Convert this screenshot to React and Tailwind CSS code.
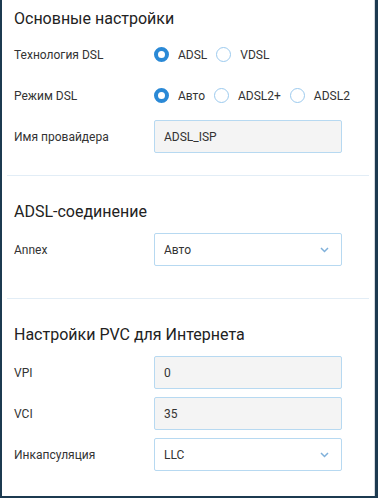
import React from "react";

function Radio({ checked, label }) {
  return (
    <label className="flex items-center gap-[9px]">
      <span
        className={`box-border h-[15px] w-[15px] shrink-0 rounded-full bg-white ${
          checked ? "border-[4px] border-[#2a89d6]" : "border border-[#9ccaee]"
        }`}
      />
      <span>{label}</span>
    </label>
  );
}

function Row({ label, children }) {
  return (
    <div className="flex h-[33px] items-center">
      <div className="w-[140px] shrink-0">{label}</div>
      {children}
    </div>
  );
}

function TextBox({ value }) {
  return (
    <div className="flex h-[33px] w-[188px] items-center rounded-[2px] border border-[#b7d9f1] bg-[#f4f4f4] pl-[9px]">
      {value}
    </div>
  );
}

function Select({ value }) {
  return (
    <div className="flex h-[33px] w-[188px] items-center justify-between rounded-[2px] border border-[#b7d9f1] bg-white pl-[9px] pr-[12px]">
      <span>{value}</span>
      <svg width="9" height="6" viewBox="0 0 9 6" fill="none" stroke="#7fb0da" strokeWidth="1.5">
        <path d="M1 1l3.5 3.5L8 1" />
      </svg>
    </div>
  );
}

export default function App() {
  return (
    <div
      className="h-[498px] w-[378px] border-b-2 border-l-2 border-r-[3px] border-[#1c3a50] bg-white text-[12px] text-[#333]"
      style={{ fontFamily: "Roboto, 'Liberation Sans', sans-serif" }}
    >
      <div className="h-full border-r border-[#d4d9de]">
        <section className="px-[12px] pb-[22px] pt-[9px]">
          <h2 className="mb-[9px] text-[16px] leading-[20px] text-[#222]">Основные настройки</h2>
          <div className="flex flex-col gap-[8px]">
            <Row label="Технология DSL">
              <div className="flex items-center gap-[9px]">
                <Radio checked label="ADSL" />
                <Radio label="VDSL" />
              </div>
            </Row>
            <Row label="Режим DSL">
              <div className="flex items-center gap-[9px]">
                <Radio checked label="Авто" />
                <Radio label="ADSL2+" />
                <Radio label="ADSL2" />
              </div>
            </Row>
            <Row label="Имя провайдера">
              <TextBox value="ADSL_ISP" />
            </Row>
          </div>
        </section>
        <div className="mx-[5px] border-t border-[#e2edf6]" />
        <section className="px-[12px] pb-[32px] pt-[26px]">
          <h2 className="mb-[11px] text-[16px] leading-[20px] text-[#222]">ADSL-соединение</h2>
          <Row label="Annex">
            <Select value="Авто" />
          </Row>
        </section>
        <div className="mx-[5px] border-t border-[#e2edf6]" />
        <section className="px-[12px] pt-[26px]">
          <h2 className="mb-[11px] text-[16px] leading-[20px] text-[#222]">Настройки PVC для Интернета</h2>
          <div className="flex flex-col gap-[8px]">
            <Row label="VPI">
              <TextBox value="0" />
            </Row>
            <Row label="VCI">
              <TextBox value="35" />
            </Row>
            <Row label="Инкапсуляция">
              <Select value="LLC" />
            </Row>
          </div>
        </section>
      </div>
    </div>
  );
}
